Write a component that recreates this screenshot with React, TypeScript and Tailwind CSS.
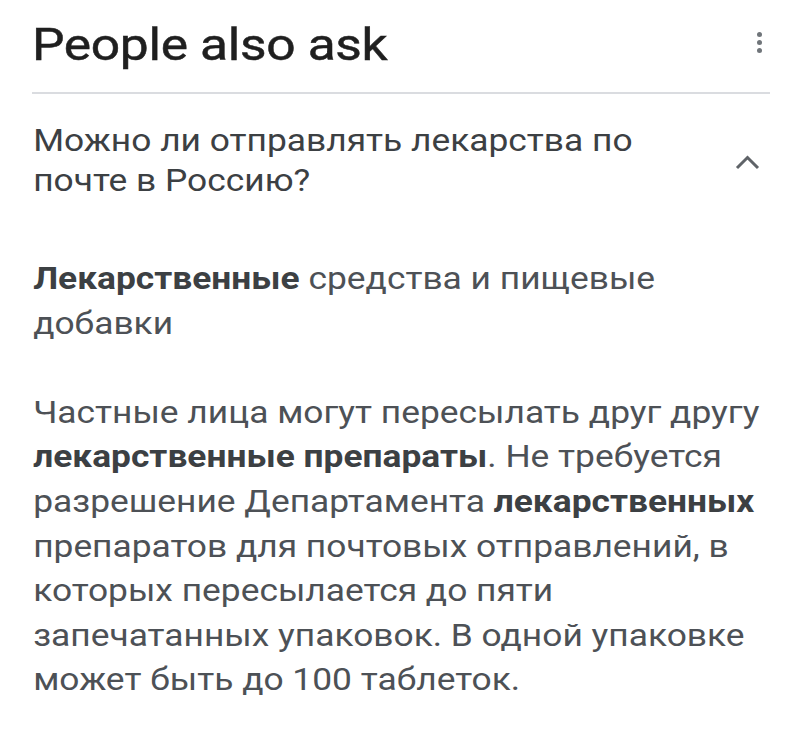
import React from "react";

export default function App() {
  return (
    <div
      className="w-[800px] h-[730px] bg-white overflow-hidden"
      style={{ fontFamily: "Roboto, 'Noto Sans', sans-serif" }}
    >
      <div className="ml-[32px] mr-[30px]">
        <div className="flex items-start justify-between h-[94px] border-b-2 border-[#dadce0]">
          <h2 className="mt-[17px] text-[45px] leading-[56px] text-[#1f1f1f] tracking-[-0.3px] origin-left scale-x-[1.145] whitespace-nowrap [-webkit-text-stroke:0.5px_#1f1f1f]">
            People also ask
          </h2>
          <div className="mt-[32px] mr-[8px] flex flex-col gap-[3px]">
            <span className="block w-[5px] h-[5px] rounded-full bg-[#70757a]" />
            <span className="block w-[5px] h-[5px] rounded-full bg-[#70757a]" />
            <span className="block w-[5px] h-[5px] rounded-full bg-[#70757a]" />
          </div>
        </div>
        <div className="flex items-center justify-between pt-[27px]">
          <div className="text-[31px] leading-[40px] text-[#3c4043] pl-[1px] origin-left scale-x-[1.14] whitespace-nowrap">
            Можно ли отправлять лекарства по
            <br />
            почте в Россию?
          </div>
          <svg
            width="25"
            height="15"
            viewBox="0 0 25 15"
            className="mr-[10px] mt-[2px]"
          >
            <path
              d="M2 13 L12.5 2.5 L23 13"
              fill="none"
              stroke="#5f6368"
              strokeWidth="3"
            />
          </svg>
        </div>
        <div className="pt-[56px] pl-[1px] text-[31px] leading-[44.6px] text-[#4d5156] origin-left scale-x-[1.14] whitespace-nowrap">
          <p>
            <b className="font-bold text-[#3c4043]">Лекарственные</b> средства и пищевые
            <br />
            добавки
          </p>
          <p className="mt-[44.6px]">
            Частные лица могут пересылать друг другу
            <br />
            <b className="font-bold text-[#3c4043]">лекарственные препараты</b>. Не требуется
            <br />
            разрешение Департамента <b className="font-bold text-[#3c4043]">лекарственных</b>
            <br />
            препаратов для почтовых отправлений, в
            <br />
            которых пересылается до пяти
            <br />
            запечатанных упаковок. В одной упаковке
            <br />
            может быть до 100 таблеток.
          </p>
        </div>
      </div>
    </div>
  );
}
